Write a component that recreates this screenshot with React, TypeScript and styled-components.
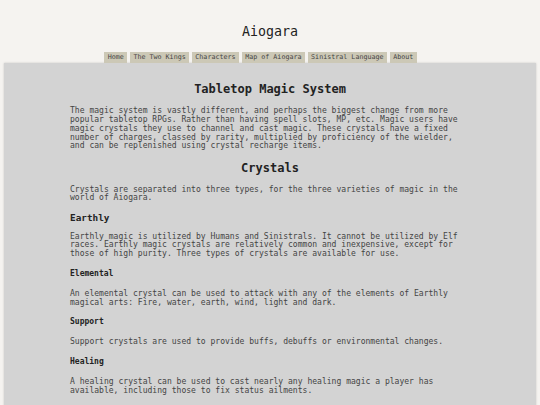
import styled, { createGlobalStyle } from 'styled-components'

const GlobalStyle = createGlobalStyle`
    body {
        margin: 0;
        background: #f5f3f0;
        font-family: "DejaVu Sans Mono", "Liberation Mono", monospace;
    }
`

const Header = styled.header`
    padding-top: 23px;
    text-align: center;
`

const SiteTitle = styled.h1`
    margin: 0 0 11px;
    font-size: 13.3px;
    font-weight: normal;
    line-height: 18px;
    color: #222;
`

const Nav = styled.nav`
    display: flex;
    justify-content: center;
    gap: 2.4px;
    padding-right: 19px;
`

const NavLink = styled.a`
    display: block;
    padding: 1.7px 3.6px;
    background: #ccc8b6;
    color: #444;
    font-size: 6.7px;
    line-height: 7.4px;
    text-decoration: none;
`

const Panel = styled.main`
    margin: 0 4px;
    padding: 10px 70px 10px 66px;
    background: #d3d3d3;
    box-shadow: 0 0 2px rgba(0, 0, 0, 0.18);
    overflow: hidden;
`

const Content = styled.article`
    font-size: 8.05px;
    line-height: 8.8px;
    color: #444;

    p {
        margin: 8px 0;
    }
`

const SectionTitle = styled.h2`
    margin: 10.6px 0;
    padding-left: 4px;
    text-align: center;
    font-size: 12px;
    line-height: 13.2px;
    color: #222;
`

const SubTitle = styled.h3`
    margin: 9.6px 0;
    font-size: 9.36px;
    line-height: 10.3px;
    color: #222;
`

const Minor = styled.h4`
    margin: 11px 0;
    font-size: 8px;
    line-height: 8.8px;
    color: #222;
`

const links = ['Home', 'The Two Kings', 'Characters', 'Map of Aiogara', 'Sinistral Language', 'About']

const App = () => {
    return (
        <>
            <GlobalStyle />
            <Header>
                <SiteTitle>Aiogara</SiteTitle>
                <Nav>
                    {links.map((l) => (
                        <NavLink key={l} href="#0">{l}</NavLink>
                    ))}
                </Nav>
            </Header>
            <Panel>
                <Content>
                    <SectionTitle>Tabletop Magic System</SectionTitle>
                    <p>
                        The magic system is vastly different, and perhaps the biggest change from more
                        popular tabletop RPGs. Rather than having spell slots, MP, etc. Magic users have
                        magic crystals they use to channel and cast magic. These crystals have a fixed
                        number of charges, classed by rarity, multiplied by proficiency of the wielder,
                        and can be replenished using crystal recharge items.
                    </p>

                    <SectionTitle>Crystals</SectionTitle>
                    <p>
                        Crystals are separated into three types, for the three varieties of magic in the
                        world of Aiogara.
                    </p>

                    <SubTitle>Earthly</SubTitle>
                    <p>
                        Earthly magic is utilized by Humans and Sinistrals. It cannot be utilized by Elf
                        races. Earthly magic crystals are relatively common and inexpensive, except for
                        those of high purity. Three types of crystals are available for use.
                    </p>

                    <Minor>Elemental</Minor>
                    <p>
                        An elemental crystal can be used to attack with any of the elements of Earthly
                        magical arts: Fire, water, earth, wind, light and dark.
                    </p>

                    <Minor>Support</Minor>
                    <p>Support crystals are used to provide buffs, debuffs or environmental changes.</p>

                    <Minor>Healing</Minor>
                    <p>
                        A healing crystal can be used to cast nearly any healing magic a player has
                        available, including those to fix status ailments.
                    </p>
                </Content>
            </Panel>
        </>
    )
}

export default App
